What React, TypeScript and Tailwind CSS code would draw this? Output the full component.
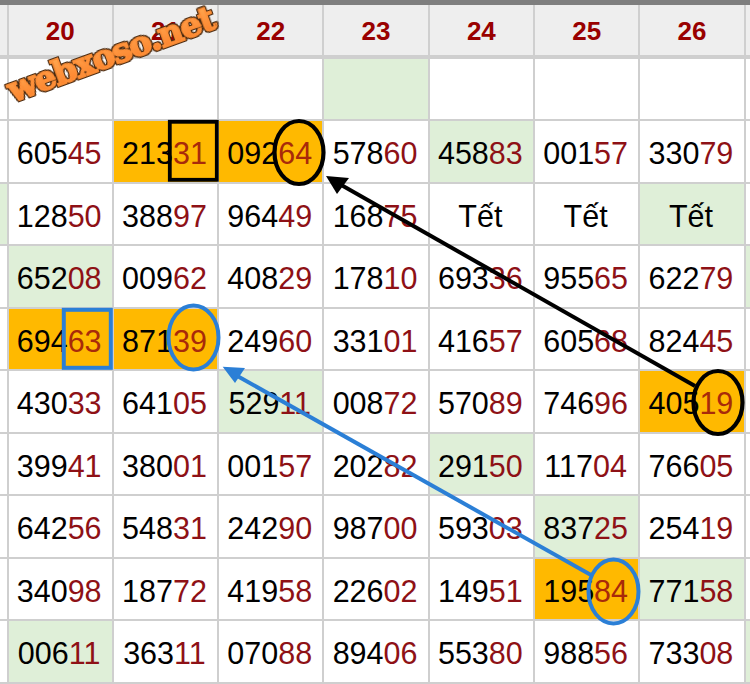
const rows: [string, string][][] = [
  [["", ""], ["", ""], ["", ""], ["", "g"], ["", ""], ["", ""], ["", ""]],
  [["60545", ""], ["21331", "o"], ["09264", "o"], ["57860", ""], ["45883", "g"], ["00157", ""], ["33079", ""]],
  [["12850", ""], ["38897", ""], ["96449", ""], ["16875", ""], ["Tết", ""], ["Tết", ""], ["Tết", "g"]],
  [["65208", "g"], ["00962", ""], ["40829", ""], ["17810", ""], ["69336", ""], ["95565", ""], ["62279", ""]],
  [["69463", "o"], ["87139", "o"], ["24960", ""], ["33101", ""], ["41657", ""], ["60568", ""], ["82445", ""]],
  [["43033", ""], ["64105", ""], ["52911", "g"], ["00872", ""], ["57089", ""], ["74696", ""], ["40519", "o"]],
  [["39941", ""], ["38001", ""], ["00157", ""], ["20282", ""], ["29150", "g"], ["11704", ""], ["76605", ""]],
  [["64256", ""], ["54831", ""], ["24290", ""], ["98700", ""], ["59303", ""], ["83725", "g"], ["25419", ""]],
  [["34098", ""], ["18772", ""], ["41958", ""], ["22602", ""], ["14951", ""], ["19584", "o"], ["77158", "g"]],
  [["00611", "g"], ["36311", ""], ["07088", ""], ["89406", ""], ["55380", ""], ["98856", ""], ["73308", ""]],
];
const leftGreen = [false, false, true, false, false, false, false, false, false, false];
const rightGreen = [false, false, false, true, false, false, false, false, false, true];
const days = ["20", "21", "22", "23", "24", "25", "26"];

function bg(k: string) {
  return k === "o" ? "bg-[#ffb900]" : k === "g" ? "bg-[#dfefd8]" : "bg-white";
}

function Cell({ text, kind }: { text: string; kind: string }) {
  const plain = text.length < 5;
  return (
    <div className={`flex items-center justify-center pr-[2px] pt-[4px] text-[30.5px] leading-none text-black ${bg(kind)}`}>
      {plain ? text : text.slice(0, 3)}
      {!plain && <span className={kind === "o" ? "text-[#a82a0a]" : "text-[#8e1116]"}>{text.slice(3)}</span>}
    </div>
  );
}

export default function App() {
  return (
    <div className="relative h-[684px] w-[750px] overflow-hidden bg-[#cfcfcf] font-['Liberation_Sans',Arial,sans-serif]">
      <div className="h-[5px] bg-[#7f7f7f]" />
      <div className="grid h-[50px] grid-cols-[6.5px_repeat(7,103.3px)_1fr] gap-x-[2px]">
        <div className="bg-[#eeeeee]" />
        {days.map((d) => (
          <div key={d} className="flex items-center justify-center bg-[#eeeeee] pt-[2px] text-[26px] font-bold leading-none text-[#990000]">
            {d}
          </div>
        ))}
        <div className="bg-[#eeeeee]" />
      </div>
      <div className="mt-[3.5px] grid grid-cols-[6.5px_repeat(7,103.3px)_1fr] auto-rows-[60.5px] gap-x-[2px] gap-y-[2px]">
        {rows.map((r, i) => (
          <div key={i} className="contents">
            <div className={leftGreen[i] ? "bg-[#dfefd8]" : "bg-white"} />
            {r.map(([t, k], j) => (
              <Cell key={j} text={t} kind={k} />
            ))}
            <div className={rightGreen[i] ? "bg-[#dfefd8]" : "bg-white"} />
          </div>
        ))}
      </div>

      <svg className="pointer-events-none absolute left-0 top-0" width="750" height="684" viewBox="0 0 750 684" fill="none">
        <rect x="169.8" y="121.8" width="47" height="58" stroke="#000" strokeWidth="3.8" />
        <ellipse cx="299" cy="152.5" rx="24.5" ry="31.5" stroke="#000" strokeWidth="4.2" />
        <ellipse cx="718" cy="402.5" rx="24.5" ry="31.5" stroke="#000" strokeWidth="4.2" />
        <line x1="336" y1="182" x2="695" y2="386" stroke="#000" strokeWidth="4" />
        <polygon points="326,176 349,178 337,194" fill="#000" />
        <rect x="63.8" y="309.8" width="47" height="58" stroke="#2b7fd6" strokeWidth="4" />
        <ellipse cx="193.5" cy="337.5" rx="25" ry="32" stroke="#2b7fd6" strokeWidth="4" />
        <ellipse cx="613.5" cy="591.5" rx="25" ry="32" stroke="#2b7fd6" strokeWidth="4" />
        <line x1="232" y1="373" x2="591" y2="575" stroke="#2b7fd6" strokeWidth="4" />
        <polygon points="222.7,366.7 245,368 235,383" fill="#2b7fd6" />
      </svg>

      <div className="absolute left-[2px] top-[37px] origin-center rotate-[-20deg] whitespace-nowrap bg-gradient-to-b from-[#ffaa52] to-[#fb7e26] bg-clip-text font-['DejaVu_Serif',serif] text-[34px] font-bold leading-none tracking-[-1.4px] text-transparent [-webkit-text-stroke:1.6px_#fd8f38] [filter:drop-shadow(1px_0_0_#4a2a10)_drop-shadow(-1px_0_0_#4a2a10)_drop-shadow(0_1px_0_#4a2a10)_drop-shadow(0_-1px_0_#4a2a10)]">
        webxoso.net
      </div>
    </div>
  );
}
